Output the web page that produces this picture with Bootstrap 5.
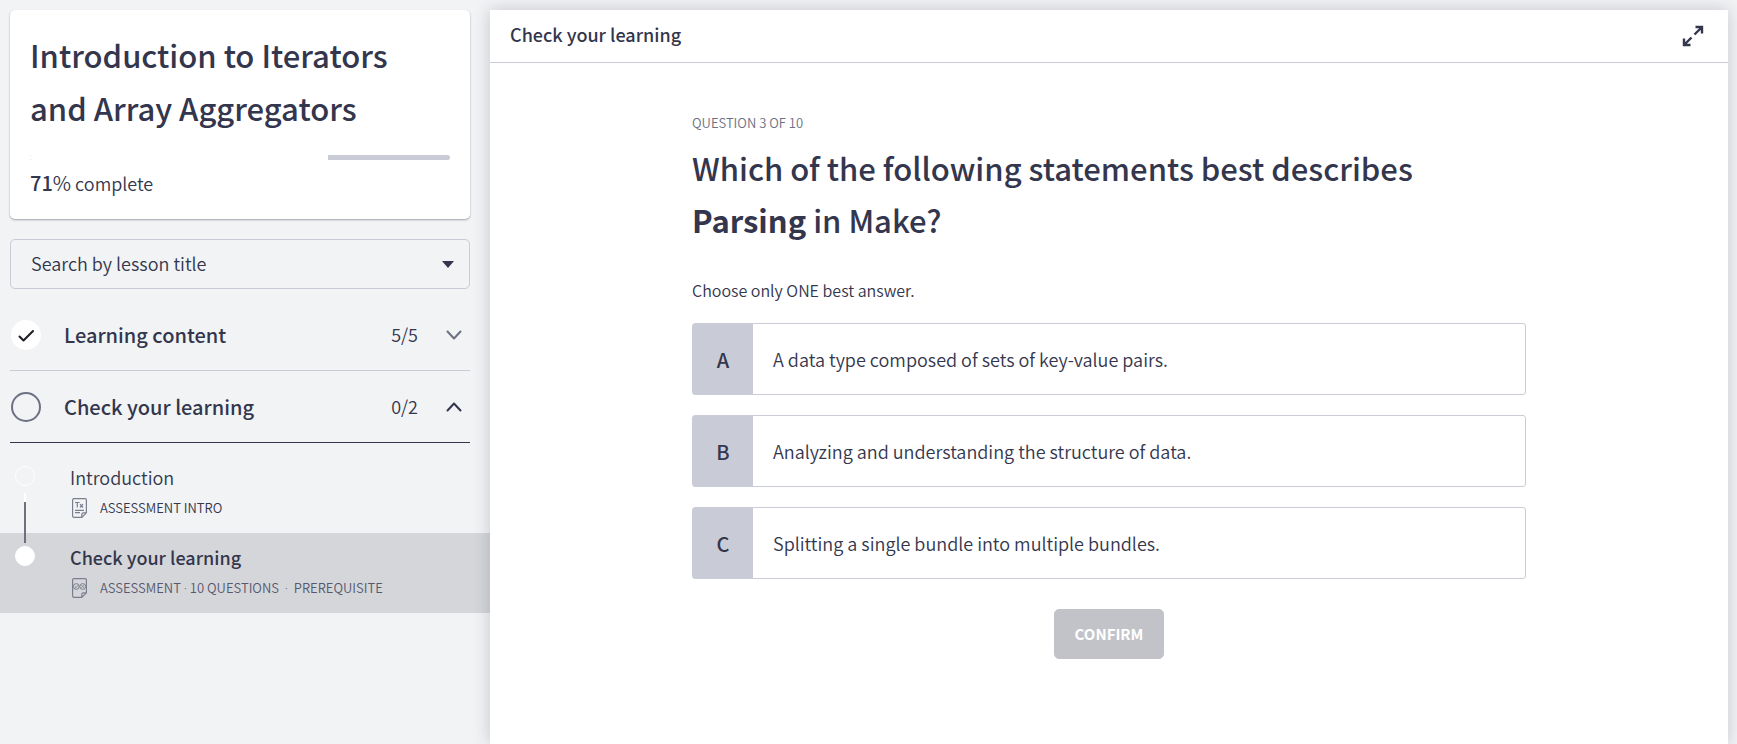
<!DOCTYPE html>
<html lang="en">
<head>
<meta charset="utf-8">
<meta name="viewport" content="width=device-width, initial-scale=1">
<title>Check your learning</title>
<link href="https://cdn.jsdelivr.net/npm/bootstrap@5.3.0/dist/css/bootstrap.min.css" rel="stylesheet">
<style>
  :root { --ink: #33364d; --ink-soft: #6d7083; --line: #c9ccd6; --page: #f1f3f5; }
  body { font-family: "Noto Sans CJK SC", "Noto Sans", sans-serif; font-size: 18px; font-weight: 350; line-height: 27px; color: var(--ink); background: var(--page); }
  .course-side { flex: 0 0 490px; }
  .side-inner { padding: 10px 20px 0 10px; }
  .course-card { border: 0; border-radius: 5px; padding: 18px 20px 22px; color: inherit; box-shadow: 0 1px 2px rgba(40, 42, 60, .4); }
  .course-title { font-size: 31px; line-height: 53px; font-weight: 500; }
  .course-progress { height: 5px; margin: 21px 0 9px; background: var(--line); border-radius: 3px; }
  .course-progress .progress-bar { background: #fff; }
  .pct { font-size: 20px; }
  .pct-value { font-weight: 500; }
  .lesson-search { height: 50px; margin-top: 20px; padding: 0 40px 2px 20px; font-size: 18px; font-weight: inherit; line-height: 27px; color: var(--ink); border: 1px solid var(--line); border-radius: 5px; background-color: transparent; background-position: right 15px center; background-size: 12px 7px;
    background-image: url("data:image/svg+xml,%3csvg xmlns='http://www.w3.org/2000/svg' viewBox='0 0 12 7'%3e%3cpath fill='%2333364d' d='M0 0h12L6 7z'/%3e%3c/svg%3e"); }
  .sections { margin-top: 10px; }
  .section-row { height: 72px; padding: 0 8px 0 1px; border: 0; border-bottom: 1px solid var(--line); background: none; color: inherit; font-weight: inherit; }
  .section-row.is-open { border-bottom-color: var(--ink); }
  .section-name { margin-left: 23px; font-size: 20px; font-weight: 500; }
  .section-count { margin-right: 28px; }
  .lessons { padding-top: 10px; }
  .lesson { height: 80px; padding: 11px 20px 0 15px; color: var(--ink); position: relative; }
  .lesson.is-current { background: #d5d6da; }
  .lesson.is-current .lesson-name { font-weight: 500; }
  .lesson-dot { width: 20px; height: 20px; margin: 2px 35px 0 0; border: 1px solid #fff; border-radius: 50%; }
  .is-current .lesson-dot { background: #fff; }
  .has-next::after { content: ""; position: absolute; z-index: 1; left: 24px; top: 40px; width: 2px; height: 50px; background: linear-gradient(#fff 9px, var(--ink-soft) 9px); }
  .lesson-meta { gap: 12px; margin-top: 7px; font-size: 13px; line-height: 20px; }
  .is-current .lesson-meta { color: #56596d; }
  .dot-sep { font-family: "Noto Sans", sans-serif; }
  .stage { margin: 10px 9px 0 0; min-width: 0; background: #fff; box-shadow: 0 0 16px rgba(40, 42, 60, .22); position: relative; }
  .stage-head { height: 53px; padding: 0 24px 0 20px; border-bottom: 1px solid var(--line); }
  .stage-title { font-size: 18px; line-height: 27px; font-weight: 500; padding-bottom: 3px; }
  .quiz { max-width: 834px; padding: 50px 0 40px; }
  .quiz-step { font-size: 13px; line-height: 20px; color: var(--ink-soft); }
  .quiz-title { margin-top: 9px; font-size: 31px; line-height: 52px; font-weight: 500; }
  .quiz-hint { margin: 32px 0 21px; font-size: 16px; line-height: 24px; }
  .answers { gap: 20px; }
  .answer { min-height: 72px; border: 1px solid var(--line); border-radius: 3px; cursor: pointer; }
  .answer-key { flex: 0 0 60px; background: var(--line); font-size: 20px; font-weight: 500; }
  .answer-text { padding: 0 20px; }
  .btn-check:checked + .answer, .btn-check:focus-visible + .answer { border-color: var(--ink); }
  .btn-confirm { --bs-btn-disabled-bg: #c2c3c9; --bs-btn-disabled-border-color: #c2c3c9; --bs-btn-disabled-color: #fff; --bs-btn-disabled-opacity: 1; margin-top: 30px; width: 110px; height: 50px; padding: 0; font-size: 15px; font-weight: 700; border-radius: 5px; }
  @media (max-width: 991px) { .course-side { flex-basis: auto; } .stage { margin-left: 9px; } .quiz { padding-left: 20px; padding-right: 20px; } }
</style>
</head>
<body>
<div class="d-flex flex-column flex-lg-row min-vh-100">
  <aside class="course-side">
    <div class="side-inner">
      <div class="card course-card">
        <h1 class="course-title mb-0">Introduction to Iterators and Array Aggregators</h1>
        <div class="progress course-progress" role="progressbar" aria-label="Course progress" aria-valuenow="71" aria-valuemin="0" aria-valuemax="100">
          <div class="progress-bar" style="width:71%"></div>
        </div>
        <div><span class="pct"><span class="pct-value">71</span>%</span> complete</div>
      </div>
      <select class="form-select lesson-search" aria-label="Search by lesson title">
        <option>Search by lesson title</option>
      </select>
      <div class="sections">
        <button type="button" class="section-row d-flex align-items-center w-100 text-start" aria-expanded="false">
          <svg width="30" height="30" viewBox="0 0 30 30" aria-hidden="true"><circle cx="15" cy="15" r="15" fill="#fff"/><path d="M8.500 16.500l4 4L22 11" fill="none" stroke="#1c1d24" stroke-width="2" stroke-linecap="round" stroke-linejoin="round"/></svg>
          <span class="section-name flex-grow-1">Learning content</span>
          <span class="section-count">5/5</span>
          <svg width="16" height="10" viewBox="0 0 16 10" fill="none" stroke="#6d7083" stroke-width="2" stroke-linecap="round" stroke-linejoin="round" aria-hidden="true"><path d="M1.500 1.500L8 8.500l6.500-7"/></svg>
        </button>
        <button type="button" class="section-row is-open d-flex align-items-center w-100 text-start" aria-expanded="true">
          <svg width="30" height="30" viewBox="0 0 30 30" aria-hidden="true"><circle cx="15" cy="15" r="14" fill="none" stroke="#6d7083" stroke-width="2"/></svg>
          <span class="section-name flex-grow-1">Check your learning</span>
          <span class="section-count">0/2</span>
          <svg width="16" height="10" viewBox="0 0 16 10" fill="none" stroke="#33364d" stroke-width="2" stroke-linecap="round" stroke-linejoin="round" aria-hidden="true"><path d="M1.500 8.500L8 1.500l6.500 7"/></svg>
        </button>
      </div>
    </div>
    <nav class="lessons" aria-label="Lessons">
      <a href="#intro" class="lesson has-next d-flex text-decoration-none">
        <span class="lesson-dot flex-shrink-0"></span>
        <span class="d-block">
          <span class="lesson-name d-block">Introduction</span>
          <span class="lesson-meta d-flex align-items-center">
            <svg width="18" height="20" viewBox="0 0 18 20" fill="none" stroke="#7b7e8f" stroke-width="1.200" aria-hidden="true"><path d="M4 .6h11q1.400 0 1.400 1.400v12.800l-4.600 4.600H4q-1.400 0-1.400-1.400V2Q2.600.6 4 .6zM16.400 14.800h-3.200q-1.400 0-1.400 1.400v3.200M5 4.500h4.600M7.300 4.500v5M10 6.200l3 3.300M13 6.200l-3 3.300M5 12.400h9M5 14.600h5"/></svg>
            <span>ASSESSMENT INTRO</span>
          </span>
        </span>
      </a>
      <a href="#check" class="lesson is-current d-flex text-decoration-none" aria-current="page">
        <span class="lesson-dot flex-shrink-0"></span>
        <span class="d-block">
          <span class="lesson-name d-block">Check your learning</span>
          <span class="lesson-meta d-flex align-items-center">
            <svg width="18" height="20" viewBox="0 0 18 20" fill="none" stroke="#7b7e8f" stroke-width="1.200" aria-hidden="true"><path d="M4 .6h11q1.400 0 1.400 1.400v12.800l-4.600 4.600H4q-1.400 0-1.400-1.400V2Q2.600.6 4 .6zM16.400 14.800h-3.200q-1.400 0-1.400 1.400v3.200"/><g stroke-width="1"><circle cx="6.300" cy="8.500" r="2.900"/><circle cx="12.700" cy="8.500" r="2.900"/><path d="M4.900 8.600l1.100 1.100 2-2.400M11.500 7.300l2.400 2.400M13.900 7.300l-2.400 2.400"/></g></svg>
            <span>ASSESSMENT <span class="dot-sep">·</span> 10 QUESTIONS &nbsp;<span class="dot-sep">·</span>&nbsp; PREREQUISITE</span>
          </span>
        </span>
      </a>
    </nav>
  </aside>

  <main class="stage flex-grow-1">
    <header class="stage-head d-flex align-items-center justify-content-between">
      <h2 class="stage-title mb-0">Check your learning</h2>
      <button type="button" class="btn border-0 p-0 lh-1" aria-label="Full screen">
        <svg class="d-block" width="22" height="22" viewBox="0 0 22 22" fill="none" stroke="#33364d" stroke-width="2.400" aria-hidden="true"><path d="M13.500 2H20v6.500M20 2l-7.500 7.500M8.500 20H2v-6.500M2 20l7.500-7.500"/></svg>
      </button>
    </header>
    <form class="quiz w-100 mx-auto">
      <p class="quiz-step mb-0">QUESTION 3 OF 10</p>
      <h3 class="quiz-title mb-0">Which of the following statements best describes <strong>Parsing</strong> in Make?</h3>
      <p class="quiz-hint">Choose only ONE best answer.</p>
      <div class="answers d-flex flex-column">
        <div>
          <input type="radio" class="btn-check" name="answer" id="answer-a">
          <label class="answer d-flex" for="answer-a"><span class="answer-key d-flex align-items-center justify-content-center">A</span><span class="answer-text d-flex align-items-center">A data type composed of sets of key-value pairs.</span></label>
        </div>
        <div>
          <input type="radio" class="btn-check" name="answer" id="answer-b">
          <label class="answer d-flex" for="answer-b"><span class="answer-key d-flex align-items-center justify-content-center">B</span><span class="answer-text d-flex align-items-center">Analyzing and understanding the structure of data.</span></label>
        </div>
        <div>
          <input type="radio" class="btn-check" name="answer" id="answer-c">
          <label class="answer d-flex" for="answer-c"><span class="answer-key d-flex align-items-center justify-content-center">C</span><span class="answer-text d-flex align-items-center">Splitting a single bundle into multiple bundles.</span></label>
        </div>
      </div>
      <button type="submit" class="btn btn-confirm d-block mx-auto" disabled>CONFIRM</button>
    </form>
  </main>
</div>
<script src="https://cdn.jsdelivr.net/npm/bootstrap@5.3.0/dist/js/bootstrap.bundle.min.js"></script>
</body>
</html>
